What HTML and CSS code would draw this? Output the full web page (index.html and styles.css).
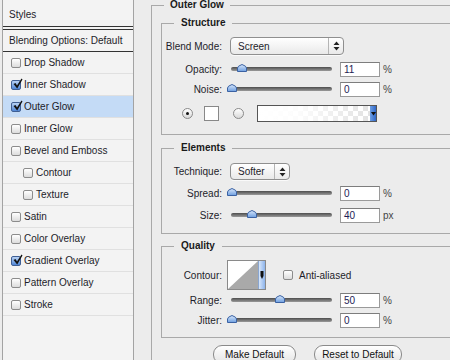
FILE: index.html
```html
<!DOCTYPE html>
<html lang="en">

<head>
    <meta charset="UTF-8">
    <title>Layer Style - Outer Glow</title>
    <link rel="stylesheet" href="styles.css">
</head>

<body>
    <div class="dialog">

        <!-- left column: list of effects -->
        <div class="sidebar">
            <div class="side-head">Styles</div>
            <div class="side-blend">Blending Options: Default</div>
            <ul class="fx-list">
                <li><span class="check"></span>Drop Shadow</li>
                <li><span class="check on"></span>Inner Shadow</li>
                <li class="selected"><span class="check on"></span>Outer Glow</li>
                <li><span class="check"></span>Inner Glow</li>
                <li><span class="check"></span>Bevel and Emboss</li>
                <li class="sub"><span class="check"></span>Contour</li>
                <li class="sub"><span class="check"></span>Texture</li>
                <li><span class="check"></span>Satin</li>
                <li><span class="check"></span>Color Overlay</li>
                <li><span class="check on"></span>Gradient Overlay</li>
                <li><span class="check"></span>Pattern Overlay</li>
                <li><span class="check"></span>Stroke</li>
            </ul>
        </div>

        <!-- right column: settings of the selected effect -->
        <fieldset class="group">
            <legend>Outer Glow</legend>

            <fieldset class="box structure">
                <legend>Structure</legend>
                <div class="row row-select">
                    <label class="lbl">Blend Mode:</label>
                    <div class="select blend">
                        <span class="select-text">Screen</span>
                        <span class="stepper">
                            <svg width="7" height="10" viewBox="0 0 7 10"><path d="M3.5 0.5 L6.5 4 H0.5 Z M3.5 9.5 L6.5 6 H0.5 Z" fill="#222"/></svg>
                        </span>
                    </div>
                </div>
                <div class="row">
                    <label class="lbl">Opacity:</label>
                    <div class="slider"><div class="track"></div><span class="thumb" style="left: 10px"></span></div>
                    <div class="num">11</div><span class="unit">%</span>
                </div>
                <div class="row">
                    <label class="lbl">Noise:</label>
                    <div class="slider"><div class="track"></div><span class="thumb" style="left: 0px"></span></div>
                    <div class="num">0</div><span class="unit">%</span>
                </div>
                <div class="row row-color">
                    <span class="radio on"></span>
                    <span class="swatch"></span>
                    <span class="radio radio-2"></span>
                    <div class="gradient">
                        <div class="gradient-preview"></div>
                        <div class="gradient-arrow">
                            <svg width="5" height="5" viewBox="0 0 5 5"><path d="M0 1 H5 L2.5 4.5 Z" fill="#111"/></svg>
                        </div>
                    </div>
                </div>
            </fieldset>

            <fieldset class="box elements">
                <legend>Elements</legend>
                <div class="row row-select">
                    <label class="lbl">Technique:</label>
                    <div class="select technique">
                        <span class="select-text">Softer</span>
                        <span class="stepper">
                            <svg width="7" height="10" viewBox="0 0 7 10"><path d="M3.5 0.5 L6.5 4 H0.5 Z M3.5 9.5 L6.5 6 H0.5 Z" fill="#222"/></svg>
                        </span>
                    </div>
                </div>
                <div class="row">
                    <label class="lbl">Spread:</label>
                    <div class="slider"><div class="track"></div><span class="thumb" style="left: 0px"></span></div>
                    <div class="num">0</div><span class="unit">%</span>
                </div>
                <div class="row">
                    <label class="lbl">Size:</label>
                    <div class="slider"><div class="track"></div><span class="thumb" style="left: 20px"></span></div>
                    <div class="num">40</div><span class="unit">px</span>
                </div>
            </fieldset>

            <fieldset class="box quality">
                <legend>Quality</legend>
                <div class="row row-contour">
                    <label class="lbl">Contour:</label>
                    <div class="contour">
                        <svg class="curve" width="30" height="28" viewBox="0 0 30 28">
                            <rect width="30" height="28" fill="#fff"/>
                            <path d="M0 28 L30 0 V28 Z" fill="#a9a9a9"/>
                        </svg>
                        <div class="contour-arrow">
                            <svg width="4" height="8" viewBox="0 0 4 8"><path d="M0.5 0 H3.5 V5 L2 8 L0.5 5 Z" fill="#111"/></svg>
                        </div>
                    </div>
                    <span class="check anti"></span>
                    <span class="anti-text">Anti-aliased</span>
                </div>
                <div class="row">
                    <label class="lbl">Range:</label>
                    <div class="slider"><div class="track"></div><span class="thumb" style="left: 48px"></span></div>
                    <div class="num">50</div><span class="unit">%</span>
                </div>
                <div class="row">
                    <label class="lbl">Jitter:</label>
                    <div class="slider"><div class="track"></div><span class="thumb" style="left: 0px"></span></div>
                    <div class="num">0</div><span class="unit">%</span>
                </div>
            </fieldset>

            <div class="buttons">
                <button class="btn btn-make">Make Default</button>
                <button class="btn btn-reset">Reset to Default</button>
            </div>
        </fieldset>
    </div>
</body>

</html>
```

FILE: styles.css
```css
* {
    box-sizing: border-box;
}

html,
body {
    margin: 0;
    width: 450px;
    height: 360px;
    overflow: hidden;
}

body {
    background-color: #ececec;
    font-family: "Liberation Sans", Arial, sans-serif;
    font-size: 10px;
    color: #1d1d2a;
}

.dialog {
    display: flex;
    height: 360px;
}

/* left list */

.sidebar {
    width: 132px;
    height: 360px;
    margin-left: 2px;
    border-left: 1px solid #a3a3a3;
    border-right: 1px solid #a3a3a3;
    background-color: #f3f3f3;
    flex-shrink: 0;
}

.side-head {
    height: 27px;
    padding: 4px 0 0 6px;
    line-height: 22px;
    border-bottom: 1px solid #333;
}

.side-blend {
    height: 23px;
    margin-top: 2px;
    padding-left: 6px;
    line-height: 21px;
    border-top: 1px solid #333;
    border-bottom: 1px solid #333;
}

.fx-list {
    list-style-type: none;
    margin: 0;
    padding: 0;
}

.fx-list li {
    display: flex;
    align-items: center;
    height: 22px;
    padding-left: 8px;
    border-bottom: 1px solid #e0e0e0;
}

.fx-list li.sub {
    padding-left: 20px;
}

.fx-list li.selected {
    background-color: #c4dbf6;
}

.check {
    display: inline-block;
    position: relative;
    width: 10px;
    height: 10px;
    margin-right: 3px;
    border: 1px solid #8c8c8c;
    border-radius: 2px;
    background: linear-gradient(#ffffff, #dcdcdc);
    flex-shrink: 0;
}

.check.on {
    border-color: #3f5f94;
    background: linear-gradient(#b9d3f5, #4f86d6);
}

/* the tick sticks out of the box a little, like the mac one */
.check.on::after {
    content: "";
    position: absolute;
    left: 1px;
    top: -3px;
    width: 10px;
    height: 11px;
    background: url("data:image/svg+xml,%3Csvg xmlns='http://www.w3.org/2000/svg' width='10' height='11' viewBox='0 0 10 11'%3E%3Cpath d='M0.5 6 L2.5 5 L4 7.5 L8.5 0.5 L9.5 1.5 L4.2 10.5 Z' fill='%23111'/%3E%3C/svg%3E") no-repeat;
}

/* right side group boxes, cut off by the window on the right */

fieldset {
    min-width: 0;
    margin: 0;
    padding: 0;
    border: 1px solid #a9a9a9;
}

legend {
    line-height: 10px;
    font-weight: bold;
    color: #1a1a1a;
}

.group {
    width: 299px;
    height: 360px;
    margin-left: 17px;
    padding: 0 0 0 9px;
    border-right: 0;
    border-bottom: 0;
    flex-shrink: 0;
}

.group > legend {
    margin-left: 3px;
    padding: 0 6px;
}

.box {
    border-right: 0;
}

.box > legend {
    margin-left: 12px;
    padding: 0 7px;
}

.structure {
    margin-top: 8px;
    padding: 9px 0 11px;
}

.elements {
    margin-top: 8px;
    padding: 10px 0 8px;
}

.quality {
    margin-top: 7px;
    padding: 9px 0 7px;
}

.row {
    display: flex;
    align-items: center;
    height: 20px;
}

.row-select {
    height: 17px;
}

.structure .row-select {
    height: 18px;
    margin-bottom: 4px;
}

.elements .row-select {
    margin-bottom: 3px;
}

.elements .row + .row + .row {
    margin-top: 2px;
}

.lbl {
    width: 60px;
    margin-right: 5px;
    text-align: right;
    flex-shrink: 0;
}

/* popup menus */

.select {
    display: flex;
    align-items: center;
    height: 100%;
    margin-left: 3px;
    border: 1px solid #8f8f8f;
    border-radius: 4px;
    background: linear-gradient(#ffffff, #e9e9e9);
    box-shadow: 0 1px 0 #fafafa;
}

.select.blend {
    width: 114px;
}

.select.technique {
    width: 60px;
}

.select-text {
    flex: 1;
    padding-left: 7px;
}

.stepper {
    display: flex;
    align-items: center;
    justify-content: center;
    width: 15px;
    height: 100%;
    border-left: 1px solid #b5b5b5;
}

/* sliders */

.slider {
    position: relative;
    display: flex;
    align-items: center;
    width: 105px;
    height: 20px;
    flex-shrink: 0;
}

.track {
    width: 101px;
    height: 4px;
    margin-left: 4px;
    border-radius: 2px;
    background: linear-gradient(#4d4d4d, #9a9a9a);
}

.thumb {
    position: absolute;
    top: 5px;
    width: 10px;
    height: 8px;
    background: url("data:image/svg+xml,%3Csvg xmlns='http://www.w3.org/2000/svg' width='10' height='8' viewBox='0 0 10 8'%3E%3Cdefs%3E%3ClinearGradient id='g' x1='0' y1='0' x2='0' y2='1'%3E%3Cstop offset='0' stop-color='%23d9e8fb'/%3E%3Cstop offset='1' stop-color='%236d9ee0'/%3E%3C/linearGradient%3E%3C/defs%3E%3Cpath d='M0.5 7.5 V4 Q0.5 2 5 0.5 Q9.5 2 9.5 4 V7.5 Z' fill='url(%23g)' stroke='%233b62a3'/%3E%3C/svg%3E") no-repeat;
}

.num {
    width: 40px;
    height: 15px;
    margin-left: 8px;
    padding-left: 3px;
    line-height: 13px;
    border: 1px solid #9a9a9a;
    border-top-color: #7d7d7d;
    background-color: #fff;
    color: #1d1d55;
    flex-shrink: 0;
}

.unit {
    margin-left: 3px;
    color: #444;
}

/* glow colour / gradient */

.row-color {
    margin-top: 4px;
}

.radio {
    display: inline-block;
    position: relative;
    width: 11px;
    height: 11px;
    margin-left: 20px;
    border: 1px solid #8a8a8a;
    border-radius: 50%;
    background: linear-gradient(#ffffff, #d9d9d9);
    flex-shrink: 0;
}

.radio.on::after {
    content: "";
    position: absolute;
    left: 3px;
    top: 3px;
    width: 3px;
    height: 3px;
    border-radius: 50%;
    background-color: #111;
}

.radio-2 {
    margin-left: 14px;
}

.swatch {
    width: 15px;
    height: 15px;
    margin-left: 11px;
    border: 1px solid #888;
    background-color: #fff;
    flex-shrink: 0;
}

.gradient {
    display: flex;
    width: 120px;
    height: 17px;
    margin-left: 13px;
    border: 1px solid #555;
    flex-shrink: 0;
}

.gradient-preview {
    flex: 1;
    background:
        linear-gradient(to right, #fff 0%, rgba(255, 255, 255, 0.9) 35%, rgba(255, 255, 255, 0) 100%),
        conic-gradient(#e2e2e2 25%, #fff 0 50%, #e2e2e2 0 75%, #fff 0) 0 0 / 10px 10px;
}

.gradient-arrow {
    display: flex;
    align-items: center;
    justify-content: center;
    width: 6px;
    background: linear-gradient(to right, #6e9fe4, #2f67c8);
}

/* contour */

.row-contour {
    height: 30px;
}

.contour {
    display: flex;
    width: 39px;
    height: 30px;
    border: 1px solid #8a8a8a;
    background-color: #fff;
    flex-shrink: 0;
}

.curve {
    display: block;
}

.contour-arrow {
    display: flex;
    align-items: center;
    justify-content: center;
    flex: 1;
    border-left: 1px solid #8aa6d0;
    background: linear-gradient(to right, #d7e6fa, #8db4ec);
}

.check.anti {
    margin-left: 17px;
    margin-right: 6px;
}

/* buttons */

.buttons {
    display: flex;
    gap: 18px;
    margin-top: 7px;
    padding-left: 52px;
}

.btn {
    height: 19px;
    padding: 0;
    border: 1px solid #8a8a8a;
    border-radius: 9px;
    background: linear-gradient(#ffffff, #e4e4e4);
    font-family: "Liberation Sans", Arial, sans-serif;
    font-size: 10px;
    color: #111;
    flex-shrink: 0;
}

.btn-make {
    width: 83px;
}

.btn-reset {
    width: 88px;
}
```
